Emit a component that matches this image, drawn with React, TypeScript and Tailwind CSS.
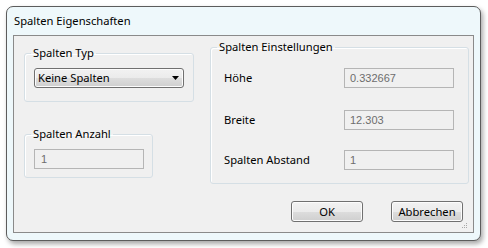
// Column properties dialog (Win7 style)

import { ReactNode } from 'react';

const font = { fontFamily: '"Noto Sans", "Open Sans", sans-serif' };

const Group = ({
  title,
  className,
  bodyClassName,
  children,
}: {
  title: string;
  className?: string;
  bodyClassName?: string;
  children: ReactNode;
}) => (
  <fieldset
    className={`border border-[#d5dfe5] rounded-[3px] shadow-[inset_1px_1px_0_#ffffff] ${className ?? ''}`}
  >
    <legend className="ml-[6px] px-[2px] text-[11.2px] leading-[16px] text-black">{title}</legend>
    <div className={bodyClassName}>{children}</div>
  </fieldset>
);

const Field = ({ value, className }: { value: string; className?: string }) => (
  <div
    className={`h-[20px] w-[110px] border border-[#b5b5b5] bg-[#f0f0f0] flex items-center pl-[5px] text-[11px] text-[#6d6d6d] ${className ?? ''}`}
    style={{ fontFamily: '"Liberation Sans", Arial, sans-serif' }}
  >
    {value}
  </div>
);

const Button = ({ label }: { label: string }) => (
  <button className="w-[72px] h-[21px] rounded-[3px] border border-[#707070] bg-[linear-gradient(to_bottom,#f2f2f2_0%,#ebebeb_50%,#dddddd_51%,#cfcfcf_100%)] shadow-[inset_0_0_0_1px_#fcfcfc] text-[11.2px] leading-none text-black">
    {label}
  </button>
);

const Row = ({ label, value, className }: { label: string; value: string; className?: string }) => (
  <div className={`flex items-center ${className ?? ''}`}>
    <span className="w-[120px] text-[11.2px] text-black">{label}</span>
    <Field value={value} />
  </div>
);

export default function App() {
  return (
    <div className="w-[488px] h-[248px] bg-white pt-[6px] pl-[6px]" style={font}>
      <div className="w-[475px] h-[235px] rounded-[7px] border border-[#5c5c5c] bg-[#eef8fb] shadow-[2px_3px_5px_rgba(0,0,0,0.35)] flex flex-col">
        <div className="h-[28px] pl-[7px] flex items-center text-[11.2px] text-black">
          Spalten Eigenschaften
        </div>

        <div className="relative mx-[6px] h-[198px] border border-[#8a8a8a] bg-[#f0f0f0] flex flex-col">
          <div className="flex">
            <div className="pl-[10px] pt-[9px] flex flex-col items-start">
              <Group title="Spalten Typ" className="w-[170px]" bodyClassName="pl-[9px] pb-[13px]">
                <div className="mt-[7px] w-[150px] h-[20px] rounded-[3px] border border-[#707070] bg-[linear-gradient(to_bottom,#f2f2f2_0%,#ebebeb_50%,#dddddd_51%,#cfcfcf_100%)] shadow-[inset_0_0_0_1px_#fcfcfc] flex items-center justify-between pl-[3px] pr-[4px] text-[11.2px] text-black">
                  <span>Keine Spalten</span>
                  <svg width="7" height="4" viewBox="0 0 7 4">
                    <path d="M0 0h7L3.5 4z" fill="#000" />
                  </svg>
                </div>
              </Group>

              <Group title="Spalten Anzahl" className="mt-[24px] w-[129px]" bodyClassName="pl-[9px] pb-[8px]">
                <Field value="1" className="mt-[7px] pl-[6px]" />
              </Group>
            </div>

            <Group
              title="Spalten Einstellungen"
              className="ml-[16px] mt-[3px] w-[259px]"
              bodyClassName="pl-[13px] pb-[13px]"
            >
              <Row label="Höhe" value="0.332667" className="mt-[13px]" />
              <Row label="Breite" value="12.303" className="mt-[22px]" />
              <Row label="Spalten Abstand" value="1" className="mt-[20px]" />
            </Group>
          </div>

          <div className="mt-[17px] pr-[10px] flex justify-end gap-[28px]">
            <Button label="OK" />
            <Button label="Abbrechen" />
          </div>

          <svg className="absolute right-[5px] bottom-[2px]" width="7" height="7" viewBox="0 0 7 7">
            <g fill="#a8a8a8">
              <rect x="5" y="0" width="1" height="1" />
              <rect x="3" y="2" width="1" height="1" />
              <rect x="5" y="2" width="1" height="1" />
              <rect x="1" y="4" width="1" height="1" />
              <rect x="3" y="4" width="1" height="1" />
              <rect x="5" y="4" width="1" height="1" />
            </g>
          </svg>
        </div>
      </div>
    </div>
  );
}
